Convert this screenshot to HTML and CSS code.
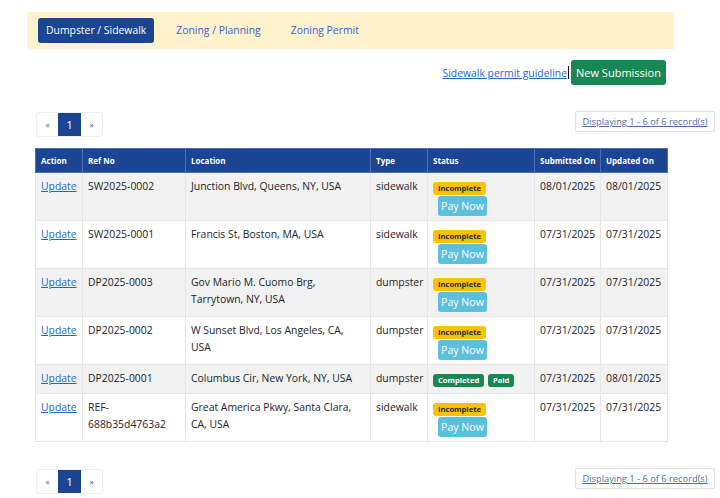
FILE: index.html
```html
<!DOCTYPE html>
<html>
<head>
<meta charset="utf-8">
<link rel="stylesheet" href="styles.css">
</head>
<body>
<div class="page">
  <nav class="tabs">
    <a class="tab active">Dumpster / Sidewalk</a>
    <a class="tab">Zoning / Planning</a>
    <a class="tab">Zoning Permit</a>
  </nav>
  <div class="actions">
    <a class="guide" href="#">Sidewalk permit guideline</a><span class="caret"></span><button class="btn-new">New Submission</button>
  </div>
  <div class="pager-row top">
    <ul class="pager"><li>«</li><li class="cur">1</li><li>»</li></ul>
    <div class="count"><a href="#">Displaying 1 - 6 of 6 record(s)</a></div>
  </div>
  <table class="grid">
    <colgroup>
      <col class="c1"><col class="c2"><col class="c3"><col class="c4"><col class="c5"><col class="c6"><col class="c7">
    </colgroup>
    <thead>
      <tr><th>Action</th><th>Ref No</th><th>Location</th><th>Type</th><th>Status</th><th>Submitted On</th><th>Updated On</th></tr>
    </thead>
    <tbody>
      <tr class="odd"><td><a href="#">Update</a></td><td>SW2025-0002</td><td>Junction Blvd, Queens, NY, USA</td><td>sidewalk</td><td><div class="st"><span class="badge warn">Incomplete</span></div><button class="pay">Pay Now</button></td><td>08/01/2025</td><td>08/01/2025</td></tr>
      <tr><td><a href="#">Update</a></td><td>SW2025-0001</td><td>Francis St, Boston, MA, USA</td><td>sidewalk</td><td><div class="st"><span class="badge warn">Incomplete</span></div><button class="pay">Pay Now</button></td><td>07/31/2025</td><td>07/31/2025</td></tr>
      <tr class="odd"><td><a href="#">Update</a></td><td>DP2025-0003</td><td>Gov Mario M. Cuomo Brg, Tarrytown, NY, USA</td><td>dumpster</td><td><div class="st"><span class="badge warn">Incomplete</span></div><button class="pay">Pay Now</button></td><td>07/31/2025</td><td>07/31/2025</td></tr>
      <tr><td><a href="#">Update</a></td><td>DP2025-0002</td><td>W Sunset Blvd, Los Angeles, CA, USA</td><td>dumpster</td><td><div class="st"><span class="badge warn">Incomplete</span></div><button class="pay">Pay Now</button></td><td>07/31/2025</td><td>07/31/2025</td></tr>
      <tr class="odd"><td><a href="#">Update</a></td><td>DP2025-0001</td><td>Columbus Cir, New York, NY, USA</td><td>dumpster</td><td class="done"><div class="st"><span class="badge ok">Completed</span> <span class="badge ok">Paid</span></div></td><td>07/31/2025</td><td>08/01/2025</td></tr>
      <tr><td><a href="#">Update</a></td><td>REF-<br>688b35d4763a2</td><td>Great America Pkwy, Santa Clara, CA, USA</td><td>sidewalk</td><td><div class="st"><span class="badge warn">Incomplete</span></div><button class="pay">Pay Now</button></td><td>07/31/2025</td><td>07/31/2025</td></tr>
    </tbody>
  </table>
  <div class="pager-row bottom">
    <ul class="pager"><li>«</li><li class="cur">1</li><li>»</li></ul>
    <div class="count"><a href="#">Displaying 1 - 6 of 6 record(s)</a></div>
  </div>
</div>
</body>
</html>
```
FILE: styles.css
```css
html, body { margin: 0; padding: 0; background: #fff; }
body { font-family: "Open Sans", "Noto Sans", sans-serif; font-size: 10.4px; color: #212529; }
.page { padding: 12px 5px 0 27px; }
.tabs { display: flex; align-items: center; width: 647px; height: 37px; box-sizing: border-box; padding: 0 11px; background: #fff3cd; }
.tab { font-size: 10.4px; color: #3b63c4; padding: 0 15px; line-height: 25px; border-radius: 3px; }
.tab.active { background: #1b4592; color: #fff; padding: 0 8px; margin-right: 7px; }
.actions { width: 639px; display: flex; justify-content: flex-end; align-items: center; margin-top: 11px; height: 25px; }
.guide { color: #2a63d4; font-size: 10.4px; text-decoration: underline; }
.caret { width: 1px; height: 13px; background: #000; margin: 0 2px 0 1px; }
.btn-new { background: #198754; color: #fff; border: 0; border-radius: 3px; font: inherit; font-size: 11px; height: 25px; width: 95px; padding: 0; }
.pager-row { display: flex; justify-content: space-between; align-items: flex-start; margin-left: 9px; }
.pager-row.top { margin-top: 26px; }
.pager-row.bottom { margin-top: 26px; }
.pager { list-style: none; margin: 1px 0 0; padding: 0; display: flex; border: 1px solid #eef0f3; border-radius: 3px; }
.pager li { width: 21px; height: 23px; line-height: 23px; text-align: center; color: #3b5f9e; font-size: 8.5px; }
.pager li.cur { width: 23px; background: #1b4592; color: #fff; font-size: 11.5px; }
.count { border: 1px solid #dee2e6; border-radius: 2px; height: 19px; width: 138px; text-align: center; line-height: 19px; }
.count a { color: #4d6fa8; font-size: 9.3px; text-decoration: underline; }
.grid { width: 632px; border-collapse: collapse; table-layout: fixed; margin: 11px 0 0 8px; }
.c1 { width: 47px; } .c2 { width: 103px; } .c3 { width: 185px; } .c4 { width: 57px; } .c5 { width: 107px; } .c6 { width: 66px; } .c7 { width: 67px; }
.grid th { background: #1b4592; color: #fff; font-size: 8px; font-weight: 700; text-align: left; height: 24px; padding: 0 5px; border: 1px solid #4a6db5; box-sizing: border-box; white-space: nowrap; line-height: 12px; }
.grid td { vertical-align: top; padding: 5px 5px 4px; line-height: 17px; border: 1px solid #e4e6e9; font-size: 10.4px; }
.grid td.done { padding-bottom: 5px; }
.grid tr.odd td { background: #f2f2f2; }
.grid td a { color: #2a63d4; text-decoration: underline; }
.st { line-height: 18px; height: 18px; white-space: nowrap; }
.badge { display: inline-block; font-size: 7.6px; font-weight: 700; line-height: 13px; padding: 0 5px; border-radius: 3px; vertical-align: middle; }
.badge.warn { background: #ffc107; color: #212529; }
.badge.ok { background: #198754; color: #fff; margin-right: 1px; }
.pay { display: block; margin: 0 0 0 5px; width: 49px; height: 20px; line-height: 20px; padding: 0; border: 0; border-radius: 3px; background: #5bc0de; color: #fff; font: inherit; font-size: 10.6px; }
```
